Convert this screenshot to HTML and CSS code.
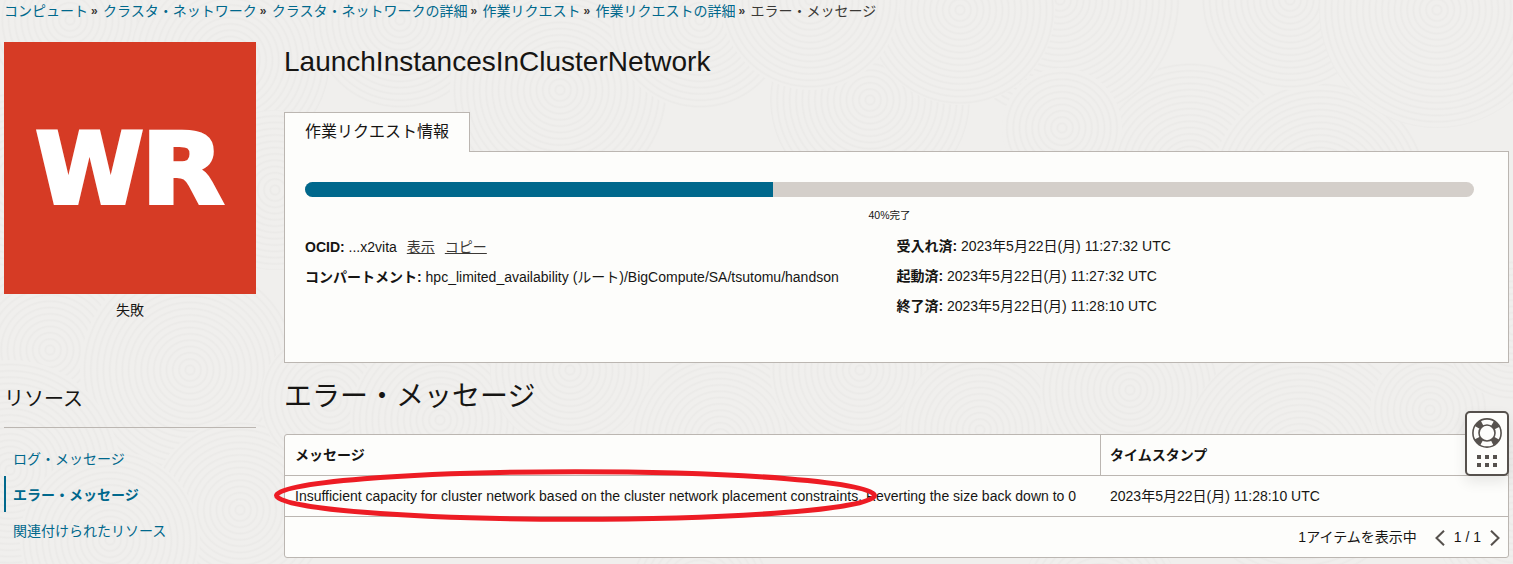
FILE: index.html
```
<!DOCTYPE html>
<html lang="ja">
<head>
<meta charset="utf-8">
<title>エラー・メッセージ</title>
<link rel="stylesheet" href="styles.css">
</head>
<body>
<svg class="backdrop" id="backdrop" width="1513" height="564" aria-hidden="true">
  <defs>
    <radialGradient id="rings" gradientUnits="userSpaceOnUse" cx="0" cy="0" r="6.3" spreadMethod="repeat">
      <stop offset="0" stop-color="#f0efed"/><stop offset=".45" stop-color="#f0efed"/><stop offset=".75" stop-color="#ebeae8"/><stop offset="1" stop-color="#f0efed"/>
    </radialGradient>
  </defs>
</svg>
<nav class="crumbs">
  <a>コンピュート</a><i>»</i><a>クラスタ・ネットワーク</a><i>»</i><a>クラスタ・ネットワークの詳細</a><i>»</i><a>作業リクエスト</a><i>»</i><a>作業リクエストの詳細</a><i>»</i><span>エラー・メッセージ</span>
</nav>
<div class="page">
  <aside class="side">
    <svg class="badge" width="252" height="252" viewBox="0 0 252 252"><text x="31.5" y="161.3">W</text><text transform="translate(137.6 161.3) scale(1.09 1)">R</text></svg>
    <p class="state">失敗</p>
    <h3 class="side-title">リソース</h3>
    <ul class="links">
      <li>ログ・メッセージ</li>
      <li class="active">エラー・メッセージ</li>
      <li>関連付けられたリソース</li>
    </ul>
  </aside>
  <main class="main">
    <h1 class="title"><span>LaunchInstancesInClusterNetwork</span></h1>
    <div class="tab">作業リクエスト情報</div>
    <section class="panel">
      <div class="progress"><div class="bar" style="width:40%"></div></div>
      <p class="percent">40%完了</p>
      <div class="facts">
        <div>
          <p><b>OCID:</b> ...x2vita<a>表示</a><a>コピー</a></p>
          <p><b>コンパートメント:</b> hpc_limited_availability (ルート)/BigCompute/SA/tsutomu/handson</p>
        </div>
        <div class="times">
          <p><b>受入れ済:</b> 2023年5月22日(月) 11:27:32 UTC</p>
          <p><b>起動済:</b> 2023年5月22日(月) 11:27:32 UTC</p>
          <p><b>終了済:</b> 2023年5月22日(月) 11:28:10 UTC</p>
        </div>
      </div>
    </section>
    <h2 class="subtitle">エラー・メッセージ</h2>
    <section class="table">
      <div class="row head"><div>メッセージ</div><div>タイムスタンプ</div></div>
      <div class="row"><div>Insufficient capacity for cluster network based on the cluster network placement constraints. Reverting the size back down to 0</div><div>2023年5月22日(月) 11:28:10 UTC</div></div>
      <div class="pager">
        <span>1アイテムを表示中</span>
        <svg class="prev" width="10" height="16" viewBox="0 0 10 16"><path d="M9 .8 1.5 8 9 15.2"/></svg>
        <span>1 / 1</span>
        <svg class="next" width="10" height="16" viewBox="0 0 10 16"><path d="M1 .8 8.5 8 1 15.2"/></svg>
      </div>
    </section>
  </main>
</div>
<svg class="highlight" width="606" height="56" viewBox="0 0 606 56"><ellipse cx="302.5" cy="27.5" rx="299" ry="23.8"/></svg>
<div class="help">
  <svg width="30" height="30" viewBox="0 0 30 30">
    <circle class="band" cx="15" cy="15" r="11"/>
    <circle class="line" cx="15" cy="15" r="14.1"/>
    <circle class="line" cx="15" cy="15" r="8"/>
  </svg>
  <svg width="20" height="12" viewBox="0 0 20 12"><path d="M0 0h4v4H0zM8 0h4v4H8zM16 0h4v4h-4zM0 8h4v4H0zM8 8h4v4H8zM16 8h4v4h-4z"/></svg>
</div>
<script src="backdrop.js"></script>
</body>
</html>
```
FILE: styles.css
```
* { box-sizing: border-box; }
body { margin: 0; width: 1513px; height: 564px; overflow: hidden; position: relative; background: #f0efed; color: #161513; font: 14px/20px "Liberation Sans", "Noto Sans CJK JP", sans-serif; }
h1, h2, h3, p, ul { margin: 0; padding: 0; font-weight: normal; list-style: none; }
.backdrop { position: absolute; left: 0; top: 0; z-index: -1; }
.crumbs { height: 42px; padding: 1px 0 0 4px; display: flex; white-space: nowrap; color: #3b3936; }
.crumbs a, .links { color: #00688c; }
.crumbs i { width: 15px; padding-left: 3px; font-style: normal; font-weight: bold; font-size: 12px; }
.page { display: flex; gap: 28px; padding-left: 4px; }
.side { width: 252px; }
.badge { display: block; background: #d63b25; }
.badge text { font: bold 98px "DejaVu Sans", sans-serif; fill: #fff; stroke: #fff; stroke-width: 3.8px; stroke-linejoin: miter; }
.state { text-align: center; height: 34px; padding-top: 6px; }
.side-title { font-size: 20px; line-height: 30px; height: 100px; padding-top: 56px; border-bottom: 1px solid #bbb6b1; }
.links { padding-top: 12px; }
.links li { height: 36px; line-height: 38px; padding-left: 9px; }
.links .active { border-left: 2px solid #00688c; padding-left: 7px; font-weight: bold; }
.main { width: 1225px; }
.title { font-size: 28px; line-height: 40px; height: 70px; }
.tab { width: 186px; height: 40px; margin-bottom: -1px; position: relative; background: #fdfdfb; border: 1px solid #bbb6b1; border-bottom: 0; padding-left: 20px; font-size: 16px; line-height: 37px; }
.panel { height: 212px; background: #fdfdfb; border: 1px solid #bbb6b1; padding: 30px 34px 0 20px; }
.progress { height: 15px; border-radius: 8px; overflow: hidden; background: #d4cfca; }
.bar { height: 15px; background: #00688c; }
.percent { font-size: 10.5px; line-height: 16px; text-align: center; padding-top: 10px; height: 35px; }
.facts { display: grid; grid-template-columns: 591.4px 1fr; line-height: 30px; white-space: nowrap; }
.facts a { margin-left: 10px; text-decoration: underline; color: #3b3936; }
.times { margin-top: -1px; }
.subtitle { font-size: 28px; line-height: 40px; height: 71px; padding-top: 14px; }
.table { height: 124px; background: #fdfdfb; border: 1px solid #bbb6b1; border-radius: 3px; }
.row { display: grid; grid-template-columns: 815px 1fr; height: 41px; border-bottom: 1px solid #bbb6b1; line-height: 40px; white-space: nowrap; }
.row div { padding-left: 10px; }
.head { font-weight: bold; }
.head div + div { border-left: 1px solid #bbb6b1; padding-left: 9px; }
.pager { display: flex; justify-content: flex-end; align-items: center; height: 40px; padding-right: 8px; line-height: 18px; }
.pager span { margin-top: -1px; }
.pager svg { fill: none; stroke: #56514d; stroke-width: 2; margin-top: 1px; }
.pager .prev { margin: 1px 9px 0 18px; }
.pager .next { margin-left: 9px; }
.highlight { position: absolute; left: 273px; top: 468px; fill: none; stroke: #ed1c24; stroke-width: 5; }
.help { position: absolute; left: 1465px; top: 411px; width: 44px; height: 65px; border: 2px solid #56514d; border-radius: 5px; background: #fdfdfb; box-shadow: 0 6px 14px rgba(0,0,0,.09); display: flex; flex-direction: column; align-items: center; padding-top: 5px; gap: 7px; fill: #56514d; }
.help circle { fill: none; stroke: #56514d; }
.help .band { stroke-width: 6; stroke-dasharray: 6.4 10.88; stroke-dashoffset: -5.44; }
.help .line { stroke-width: 1.6; }
```
FILE: backdrop.js
```
// Overlapping discs of faint concentric rings: [x, y, radius].
const discs = [
  [70,20,85],[230,60,100],[400,20,90],[560,90,110],[700,20,90],[870,100,100],[1190,170,110],
  [1320,190,110],[1060,0,120],[1290,0,90],[1437,10,118],[960,10,95],[1062,128,60],[810,0,90],
  [20,180,90],[275,190,80],[50,350,90],[190,370,110],[10,470,110],[240,510,90],[110,540,90],
  [330,400,70],[440,420,90],[570,370,80],[720,440,90],[860,370,90],[980,430,80],[1130,390,90],
  [1300,460,120],[1430,410,60],[1513,330,70],[1513,520,80],[700,590,70],[1100,600,80]
];
const svg = document.getElementById("backdrop");
for (const [x, y, r] of discs) {
  const c = document.createElementNS("http://www.w3.org/2000/svg", "circle");
  c.setAttribute("r", r);
  c.setAttribute("fill", "url(#rings)");
  c.setAttribute("transform", `translate(${x} ${y})`);
  svg.appendChild(c);
}
```
